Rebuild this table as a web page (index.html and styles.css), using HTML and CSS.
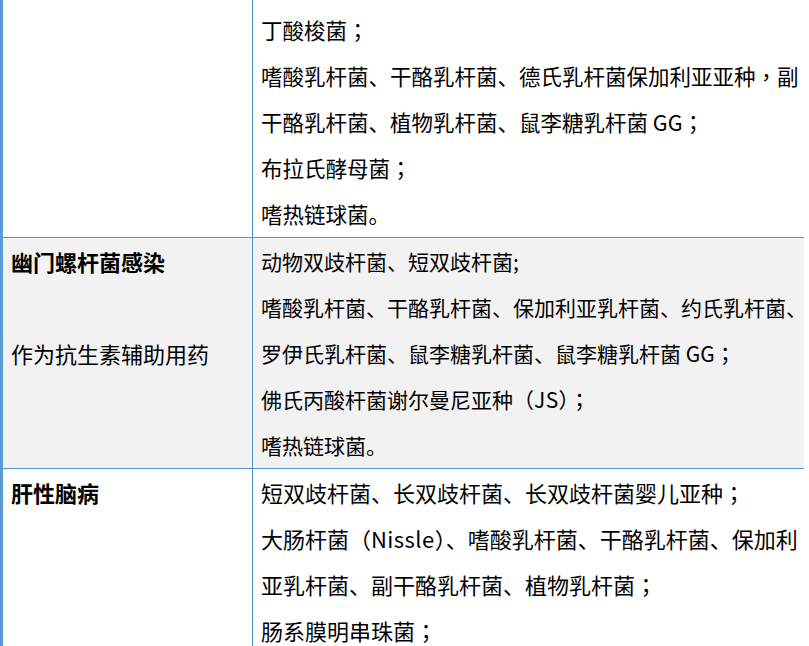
FILE: index.html
```html
<!DOCTYPE html>
<html lang="zh-CN">
<head>
<meta charset="utf-8">
<title>益生菌适应证</title>
<link rel="stylesheet" href="styles.css">
</head>
<body>
<div class="table">
  <div class="cell left first"></div>
  <div class="cell right first size-a">
    <p>丁酸梭菌<span class="pc" lang="zh-Hant">；</span></p>
    <p>嗜酸乳杆菌、干酪乳杆菌、德氏乳杆菌保加利亚亚种<span class="pc" lang="zh-Hant">，</span>副<br>干酪乳杆菌、植物乳杆菌、鼠李糖乳杆菌 GG<span class="pc" lang="zh-Hant">；</span></p>
    <p>布拉氏酵母菌<span class="pc" lang="zh-Hant">；</span></p>
    <p>嗜热链球菌。</p>
  </div>

  <div class="cell left shaded">
    <p class="title">幽门螺杆菌感染</p>
    <p>&nbsp;</p>
    <p>作为抗生素辅助用药</p>
  </div>
  <div class="cell right shaded size-b">
    <p>动物双歧杆菌、短双歧杆菌;</p>
    <p>嗜酸乳杆菌、干酪乳杆菌、保加利亚乳杆菌、约氏乳杆菌、<br>罗伊氏乳杆菌、鼠李糖乳杆菌、鼠李糖乳杆菌 GG<span class="pc" lang="zh-Hant">；</span></p>
    <p>佛氏丙酸杆菌谢尔曼尼亚种（<span class="latin">JS</span>）<span class="pc" lang="zh-Hant">；</span></p>
    <p>嗜热链球菌。</p>
  </div>

  <div class="cell left last">
    <p class="title">肝性脑病</p>
  </div>
  <div class="cell right last size-c">
    <p>短双歧杆菌、长双歧杆菌、长双歧杆菌婴儿亚种<span class="pc" lang="zh-Hant">；</span></p>
    <p>大肠杆菌（<span class="latin">Nissle</span>）、嗜酸乳杆菌、干酪乳杆菌、保加利<br>亚乳杆菌、副干酪乳杆菌、植物乳杆菌<span class="pc" lang="zh-Hant">；</span></p>
    <p>肠系膜明串珠菌<span class="pc" lang="zh-Hant">；</span></p>
  </div>
</div>
</body>
</html>
```

FILE: styles.css
```css
html, body {
  margin: 0;
  padding: 0;
  background: #ffffff;
}

body {
  font-family: "Noto Sans CJK SC", sans-serif;
  color: #000000;
  overflow: hidden;
}

.table {
  width: 808px;
  display: grid;
  grid-template-columns: 250px 551px;
  border-left: 3px solid #5b9bd5;
  border-right: 3px solid #5b9bd5;
}

.cell {
  padding: 0 0 0 8px;
  border-bottom: 1px solid #5192cc;
}

.cell.left {
  border-right: 1px solid #5192cc;
  font-size: 22px;
}

.cell.first {
  padding-top: 7px;
}

.cell.last {
  border-bottom: none;
  padding-bottom: 40px;
}

.cell.shaded {
  background: #f2f2f2;
}

.cell p {
  margin: 0;
  line-height: 46px;
  white-space: nowrap;
}

.pc {
  font-family: "Noto Sans CJK TC", "Noto Sans CJK SC", sans-serif;
}

.latin {
  letter-spacing: 0.02em;
}

.title {
  font-weight: bold;
}

.size-a { font-size: 21.5px; }
.size-b { font-size: 21px; }
.size-c { font-size: 22px; }
```
